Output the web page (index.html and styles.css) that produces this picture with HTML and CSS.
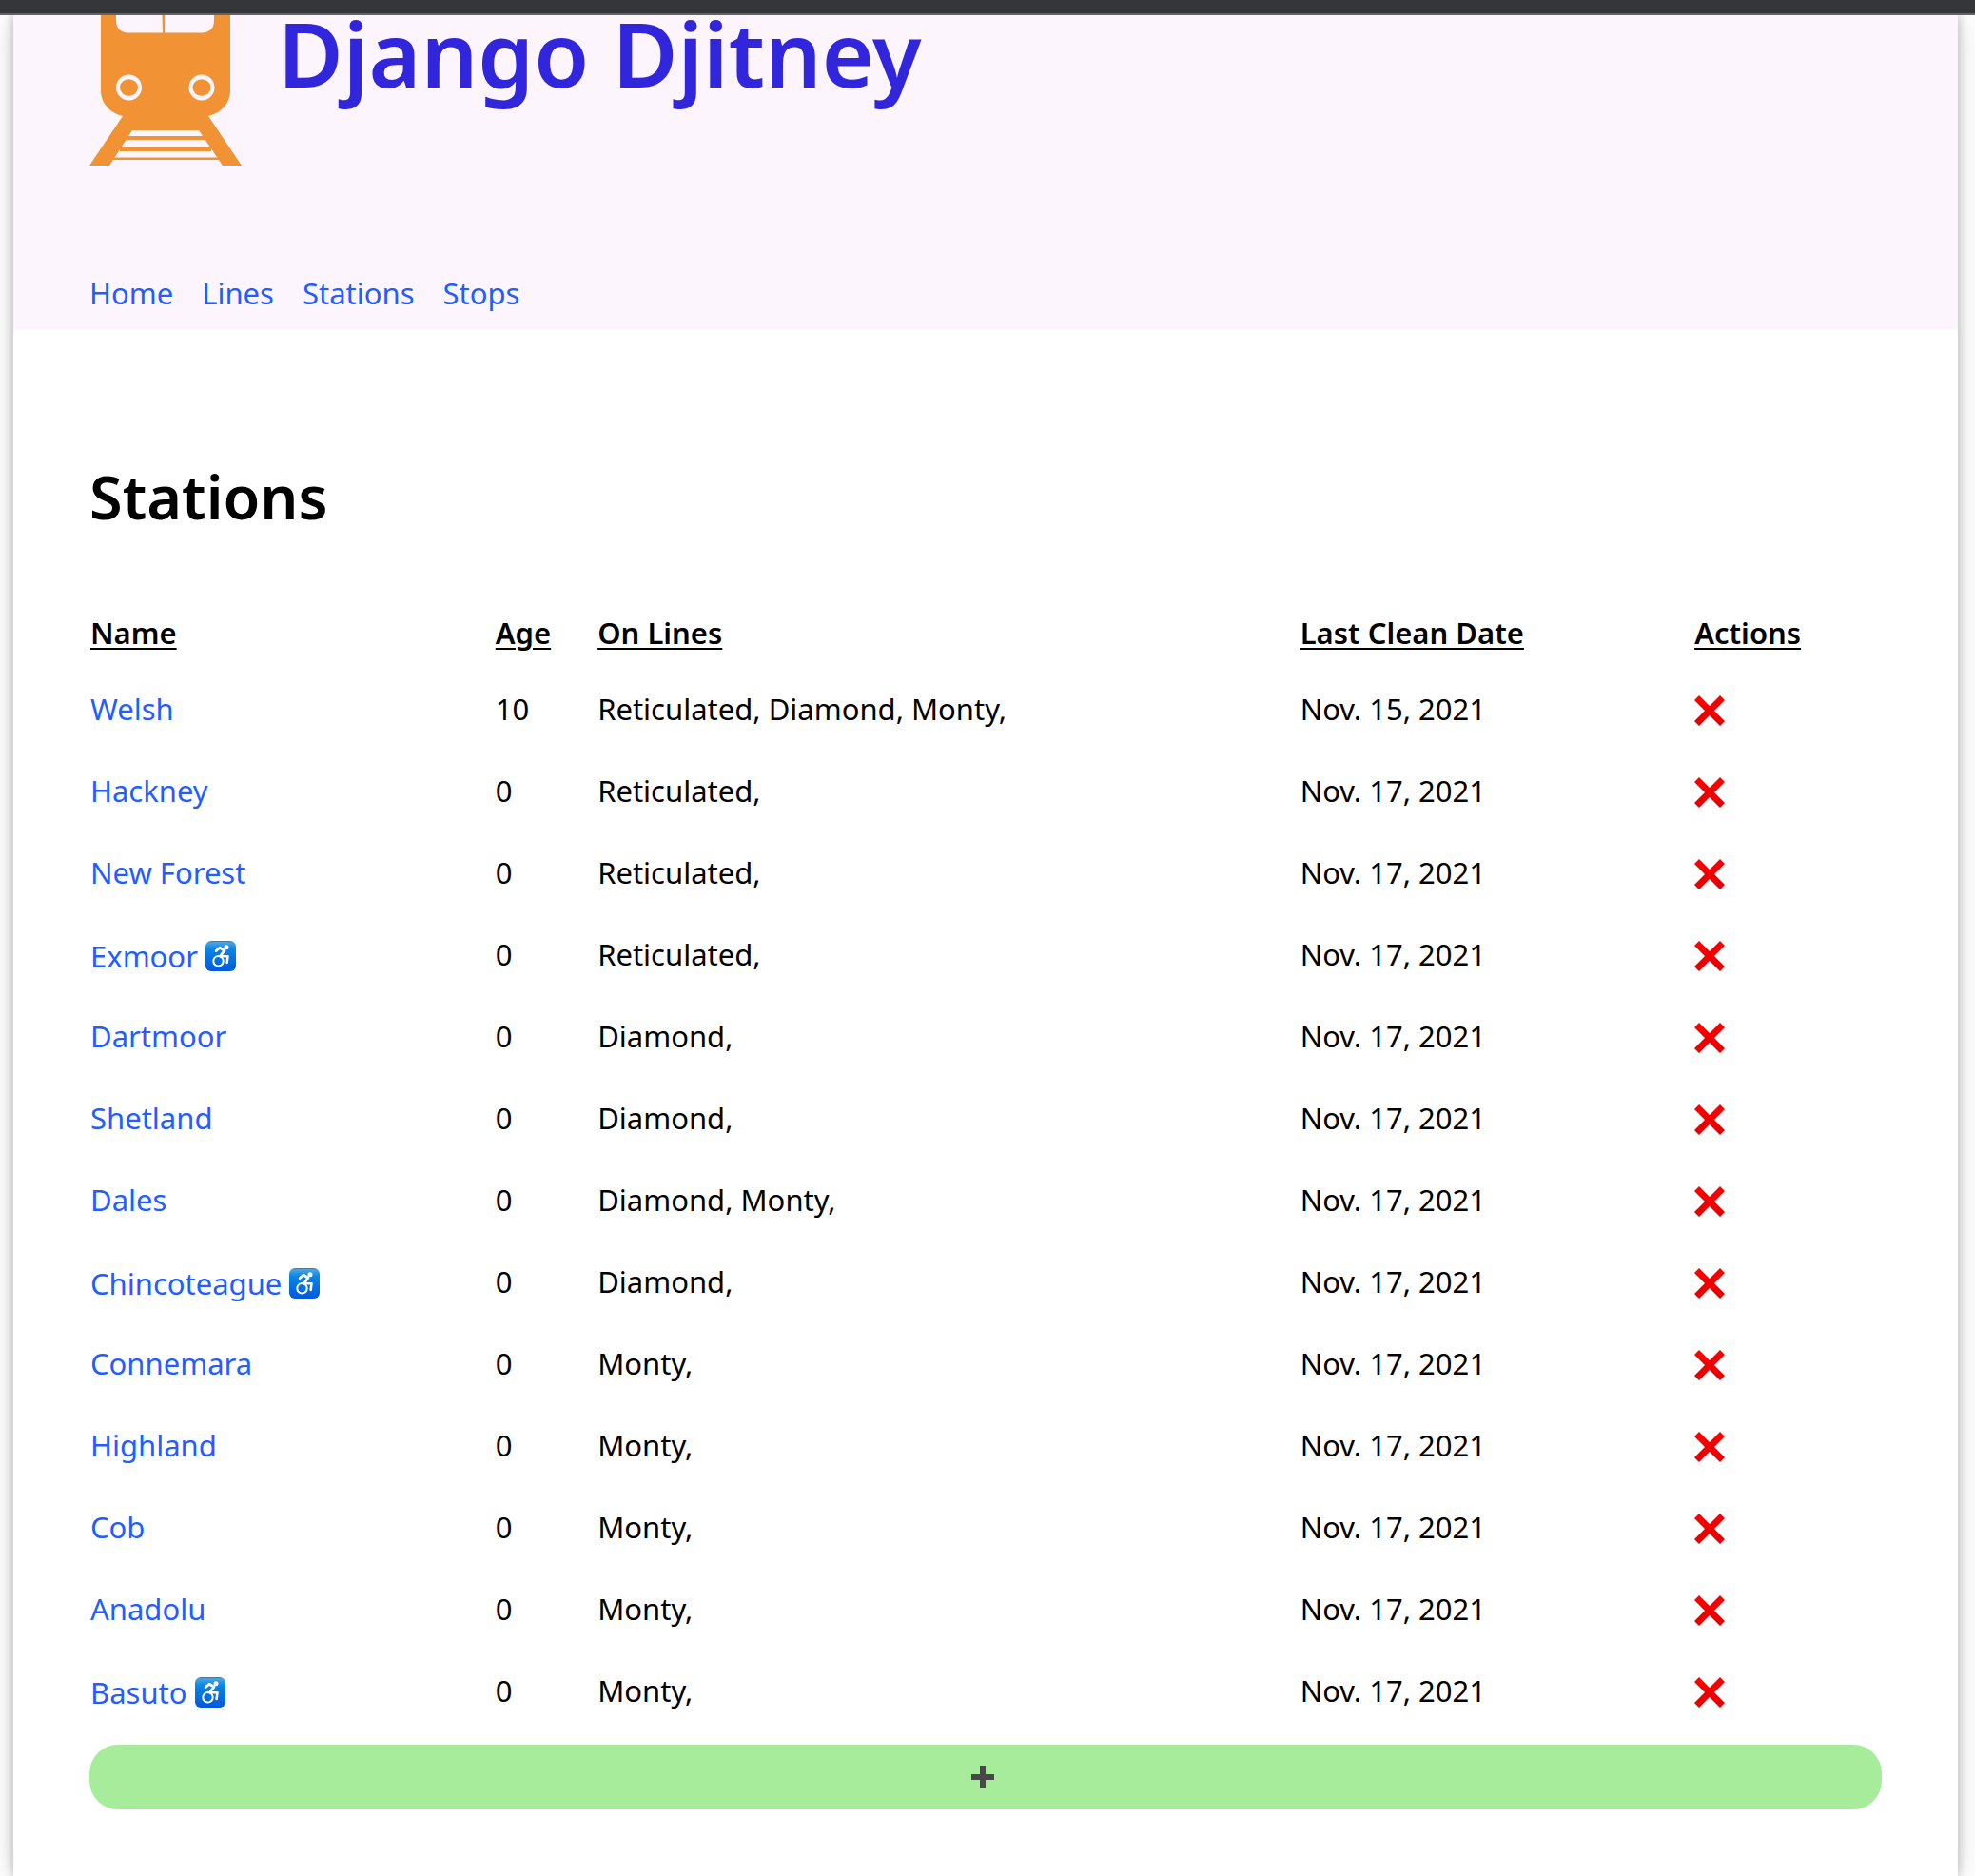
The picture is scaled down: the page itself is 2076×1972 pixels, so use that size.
FILE: index.html
```html
<!DOCTYPE html>
<html lang="en">
<head>
<meta charset="utf-8">
<title>Django Djitney</title>
<link rel="stylesheet" href="styles.css">
</head>
<body>
<svg class="sprite" aria-hidden="true">
  <defs>
    <linearGradient id="badge" x1="0" y1="0" x2="0" y2="1">
      <stop offset="0" stop-color="#1674bd"/>
      <stop offset=".05" stop-color="#4ba5e2"/>
      <stop offset=".28" stop-color="#0b84e4"/>
      <stop offset="1" stop-color="#0059dc"/>
    </linearGradient>
    <linearGradient id="red" x1="0" y1="0" x2="0" y2="1">
      <stop offset="0" stop-color="#ff0000"/>
      <stop offset="1" stop-color="#e20000"/>
    </linearGradient>
  </defs>
  <symbol id="access" viewBox="0 0 32 32">
    <rect width="32" height="32" rx="6" fill="url(#badge)"/>
    <circle cx="22" cy="6.800" r="2.500" fill="#fff"/>
    <path d="M11.200 10.500L15 7.200l5 3-4.500 5.800" fill="none" stroke="#fff" stroke-width="2.800" stroke-linejoin="round" stroke-linecap="round"/>
    <path d="M15.500 16.200h8L22.600 23" fill="none" stroke="#fff" stroke-width="2.600" stroke-linejoin="round" stroke-linecap="round"/>
    <circle cx="13.500" cy="21.300" r="5.200" fill="none" stroke="#fff" stroke-width="2"/>
  </symbol>
  <symbol id="cross" viewBox="0 0 32 32">
    <path d="M5 0L16 11 27 0 32 5 21 16 32 27 27 32 16 21 5 32 0 27 11 16 0 5z" fill="url(#red)"/>
  </symbol>
</svg>
<div class="topbar"></div>
<div class="page">
  <header class="header">
    <div class="brand">
      <svg class="logo" viewBox="0 0 160 158" role="img" aria-label="Train">
        <path fill="#f19335" fill-rule="evenodd" d="M12 0H148V79C148 93 138 103 125 106L160 158H140L115 121H45L21 158H0L35 106C22 103 12 93 12 79zM28 0V5Q28 18 41 18.500H77L76.500 0zM79 0V18.500H118Q131 18 131 5V0z"/>
        <path fill="#f19335" d="M37 127H123V131H37zM32 138.500H128V143H32zM22 149.500H138V152H22z"/>
        <g fill="#fcf5fe"><circle cx="41.500" cy="76" r="13.500"/><circle cx="118" cy="76" r="13.500"/></g>
        <g fill="#f19335"><ellipse cx="41.500" cy="76" rx="9.500" ry="8.700"/><ellipse cx="118" cy="76" rx="9.500" ry="8.700"/></g>
      </svg>
      <div class="title">Django Djitney</div>
    </div>
    <nav class="nav">
      <a href="#">Home</a>
      <a href="#">Lines</a>
      <a href="#">Stations</a>
      <a href="#">Stops</a>
    </nav>
  </header>
  <main class="main">
    <h1>Stations</h1>
    <table class="stations">
      <colgroup><col class="c-name"><col class="c-age"><col class="c-lines"><col class="c-date"><col></colgroup>
      <thead>
        <tr><th>Name</th><th>Age</th><th>On Lines</th><th>Last Clean Date</th><th>Actions</th></tr>
      </thead>
      <tbody>
        <tr><td><a href="#">Welsh</a></td><td>10</td><td>Reticulated, Diamond, Monty,</td><td>Nov. 15, 2021</td><td><button class="del" aria-label="Delete"><svg><use href="#cross"/></svg></button></td></tr>
        <tr><td><a href="#">Hackney</a></td><td>0</td><td>Reticulated,</td><td>Nov. 17, 2021</td><td><button class="del" aria-label="Delete"><svg><use href="#cross"/></svg></button></td></tr>
        <tr><td><a href="#">New Forest</a></td><td>0</td><td>Reticulated,</td><td>Nov. 17, 2021</td><td><button class="del" aria-label="Delete"><svg><use href="#cross"/></svg></button></td></tr>
        <tr><td class="accessible"><a href="#">Exmoor <svg class="access"><use href="#access"/></svg></a></td><td>0</td><td>Reticulated,</td><td>Nov. 17, 2021</td><td><button class="del" aria-label="Delete"><svg><use href="#cross"/></svg></button></td></tr>
        <tr><td><a href="#">Dartmoor</a></td><td>0</td><td>Diamond,</td><td>Nov. 17, 2021</td><td><button class="del" aria-label="Delete"><svg><use href="#cross"/></svg></button></td></tr>
        <tr><td><a href="#">Shetland</a></td><td>0</td><td>Diamond,</td><td>Nov. 17, 2021</td><td><button class="del" aria-label="Delete"><svg><use href="#cross"/></svg></button></td></tr>
        <tr><td><a href="#">Dales</a></td><td>0</td><td>Diamond, Monty,</td><td>Nov. 17, 2021</td><td><button class="del" aria-label="Delete"><svg><use href="#cross"/></svg></button></td></tr>
        <tr><td class="accessible"><a href="#">Chincoteague <svg class="access"><use href="#access"/></svg></a></td><td>0</td><td>Diamond,</td><td>Nov. 17, 2021</td><td><button class="del" aria-label="Delete"><svg><use href="#cross"/></svg></button></td></tr>
        <tr><td><a href="#">Connemara</a></td><td>0</td><td>Monty,</td><td>Nov. 17, 2021</td><td><button class="del" aria-label="Delete"><svg><use href="#cross"/></svg></button></td></tr>
        <tr><td><a href="#">Highland</a></td><td>0</td><td>Monty,</td><td>Nov. 17, 2021</td><td><button class="del" aria-label="Delete"><svg><use href="#cross"/></svg></button></td></tr>
        <tr><td><a href="#">Cob</a></td><td>0</td><td>Monty,</td><td>Nov. 17, 2021</td><td><button class="del" aria-label="Delete"><svg><use href="#cross"/></svg></button></td></tr>
        <tr><td><a href="#">Anadolu</a></td><td>0</td><td>Monty,</td><td>Nov. 17, 2021</td><td><button class="del" aria-label="Delete"><svg><use href="#cross"/></svg></button></td></tr>
        <tr><td class="accessible"><a href="#">Basuto <svg class="access"><use href="#access"/></svg></a></td><td>0</td><td>Monty,</td><td>Nov. 17, 2021</td><td><button class="del" aria-label="Delete"><svg><use href="#cross"/></svg></button></td></tr>
      </tbody>
    </table>
    <button class="add" aria-label="Add station"><svg viewBox="0 0 24 24"><path d="M9 0h6v9h9v6h-9v9H9v-9H0V9h9z" fill="#484848"/></svg></button>
  </main>
</div>
</body>
</html>
```
FILE: styles.css
```css
* { box-sizing: border-box; }
body {
  margin: 0;
  min-height: 100vh;
  display: flex;
  flex-direction: column;
  background: #fff;
  color: #000;
  font: 31px/44px "Noto Sans", sans-serif;
}
a { color: #235dff; text-decoration: none; }
.sprite { position: absolute; width: 0; height: 0; }
.topbar {
  position: relative;
  z-index: 1;
  height: 16px;
  background: #35363a;
  border-bottom: 2px solid #626166;
}
.page {
  flex: 1;
  margin: 0 18px 0 14px;
  background: #fff;
  box-shadow: 0 0 10px rgba(0, 0, 0, .25), 0 0 30px rgba(0, 0, 0, .15);
}
.header {
  padding: 0 80px 16px;
  background: #fcf5fe;
}
.brand {
  display: flex;
  gap: 38px;
  align-items: flex-start;
}
.logo { width: 160px; height: 158px; flex: none; }
.title {
  color: #3126dc;
  font-size: 94px;
  font-weight: 600;
  line-height: 80px;
}
.nav {
  display: flex;
  gap: 30px;
  margin-top: 112px;
}
.main { padding: 138px 80px 60px; }
h1 {
  margin: 0;
  font-size: 63px;
  font-weight: 600;
  line-height: 76px;
}
.stations {
  width: 100%;
  margin-top: 68px;
  table-layout: fixed;
  border-collapse: collapse;
}
.c-name { width: 22.6%; }
.c-age { width: 5.7%; }
.c-lines { width: 39.2%; }
.c-date { width: 22%; }
th, td {
  height: 86px;
  padding: 0 0 0 1px;
  text-align: left;
  vertical-align: middle;
}
th {
  height: 74px;
  font-weight: 600;
  text-decoration: underline;
  text-decoration-thickness: 2px;
  text-underline-offset: 4px;
}
.accessible { padding-top: 4px; }
.access { width: 32px; height: 32px; vertical-align: -4px; }
.del {
  display: block;
  margin-top: 4px;
  padding: 0;
  border: 0;
  background: none;
}
.del svg { display: block; width: 32px; height: 32px; }
.add {
  display: flex;
  align-items: center;
  justify-content: center;
  width: 100%;
  height: 68px;
  margin-top: 14px;
  padding: 0 6px 0 0;
  border: 0;
  border-radius: 30px;
  background: #a6ec9a;
}
.add svg { width: 24px; height: 24px; }
```
